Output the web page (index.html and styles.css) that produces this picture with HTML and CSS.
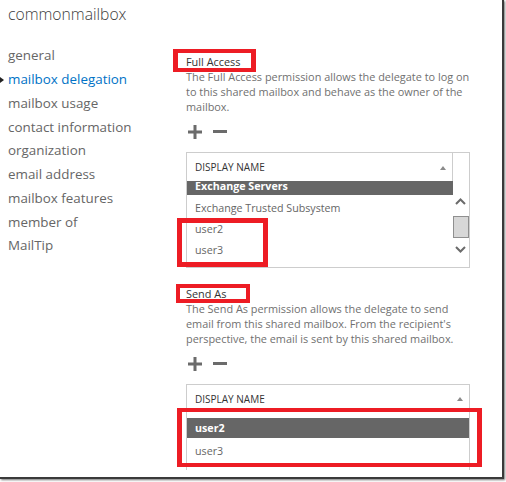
FILE: index.html
```html
<!DOCTYPE html>
<html>
<head>
<meta charset="utf-8">
<link rel="stylesheet" href="styles.css">
</head>
<body>
<div class="window">
  <div class="page">
    <h1 class="title">commonmailbox</h1>
    <div class="main">
      <ul class="nav">
        <li>general</li>
        <li class="active">mailbox delegation</li>
        <li>mailbox usage</li>
        <li>contact information</li>
        <li>organization</li>
        <li>email address</li>
        <li>mailbox features</li>
        <li>member of</li>
        <li>MailTip</li>
      </ul>
      <div class="content">
        <section class="perm">
          <div class="label">Full Access</div>
          <p class="desc">The Full Access permission allows the delegate to log on<br>to this shared mailbox and behave as the owner of the<br>mailbox.</p>
          <div class="tools">
            <svg class="ico" width="14" height="14" viewBox="0 0 14 14"><path d="M7 0V14M0 7H14" stroke="#6b6b6b" stroke-width="3"/></svg>
            <svg class="ico" width="14" height="14" viewBox="0 0 14 14"><path d="M0 6.5H14" stroke="#6b6b6b" stroke-width="3"/></svg>
          </div>
          <div class="grid">
            <div class="ghead">
              <div class="gcol gcol-split">DISPLAY NAME<span class="sort"></span></div>
              <div class="gscroll-head"></div>
            </div>
            <div class="gbody gbody-scroll">
              <div class="rows">
                <div class="row sel row-partial">Exchange Servers</div>
                <div class="row">Exchange Trusted Subsystem</div>
                <div class="row">user2</div>
                <div class="row">user3</div>
              </div>
              <div class="vscroll">
                <svg class="chev chev-up" width="11" height="7" viewBox="0 0 11 7"><polyline points="1,6 5.5,1.5 10,6" fill="none" stroke="#6b6b6b" stroke-width="2"/></svg>
                <div class="thumb"></div>
                <svg class="chev chev-down" width="11" height="7" viewBox="0 0 11 7"><polyline points="1,1 5.5,5.5 10,1" fill="none" stroke="#6b6b6b" stroke-width="2"/></svg>
              </div>
            </div>
          </div>
        </section>
        <section class="perm perm-second">
          <div class="label">Send As</div>
          <p class="desc">The Send As permission allows the delegate to send<br>email from this shared mailbox. From the recipient's<br>perspective, the email is sent by this shared mailbox.</p>
          <div class="tools">
            <svg class="ico" width="14" height="14" viewBox="0 0 14 14"><path d="M7 0V14M0 7H14" stroke="#6b6b6b" stroke-width="3"/></svg>
            <svg class="ico" width="14" height="14" viewBox="0 0 14 14"><path d="M0 6.5H14" stroke="#6b6b6b" stroke-width="3"/></svg>
          </div>
          <div class="grid grid-open">
            <div class="ghead">
              <div class="gcol">DISPLAY NAME<span class="sort"></span></div>
            </div>
            <div class="gbody gbody-plain">
              <div class="rows">
                <div class="row sel">user2</div>
                <div class="row">user3</div>
              </div>
            </div>
          </div>
        </section>
      </div>
    </div>
    <div class="mark mark-fa"></div>
    <div class="mark mark-users"></div>
    <div class="mark mark-sa"></div>
    <div class="mark mark-sausers"></div>
  </div>
</div>
</body>
</html>
```
FILE: styles.css
```css
html, body {
  margin: 0;
  padding: 0;
  background: #fff;
}
body {
  width: 506px;
  height: 482px;
  overflow: hidden;
  font-family: "Open Sans", "Noto Sans", sans-serif;
}
.window {
  width: 504px;
  height: 479px;
  box-sizing: border-box;
  border-right: 2px solid #3a3a3a;
  border-bottom: 2px solid #3a3a3a;
  box-shadow: 1px 1px 2px rgba(0,0,0,0.55);
  background: #fff;
}
.page {
  position: relative;
  height: 470px;
  overflow: hidden;
}
.title {
  margin: 0;
  padding: 4px 8px 0;
  font-size: 15.7px;
  font-weight: 300;
  line-height: 21px;
  color: #3c3c3c;
}
.main {
  display: flex;
}
.nav {
  list-style: none;
  margin: 0;
  padding: 19.3px 0 0 8px;
  width: 186px;
  box-sizing: border-box;
}
.nav li {
  position: relative;
  font-size: 13.4px;
  line-height: 23.75px;
  color: #666;
  white-space: nowrap;
}
.nav li.active {
  color: #0072c6;
}
.nav li.active::before {
  content: "";
  position: absolute;
  left: -8px;
  top: 9px;
  border-left: 4px solid #222;
  border-top: 3px solid transparent;
  border-bottom: 3px solid transparent;
}
.content {
  width: 284px;
  padding-top: 29.3px;
}
.perm-second {
  margin-top: 17.7px;
}
.label {
  font-size: 10.9px;
  line-height: 15px;
  color: #333;
}
.desc {
  margin: 0;
  font-size: 10.9px;
  line-height: 15px;
  color: #707070;
  white-space: nowrap;
}
.tools {
  display: flex;
  gap: 11px;
  margin-top: 11px;
  padding-left: 2px;
  height: 14px;
}
.ico {
  display: block;
}
.grid {
  margin-top: 13px;
  border: 1px solid #cdcdcd;
  width: 284px;
  box-sizing: border-box;
}
.ghead {
  display: flex;
  height: 28px;
}
.gcol {
  flex: 1;
  display: flex;
  align-items: center;
  justify-content: space-between;
  padding: 0 6px 0 8px;
  font-size: 10px;
  color: #333;
}
.gcol-split {
  flex: none;
  width: 266px;
  box-sizing: border-box;
  border-right: 1px solid #cdcdcd;
}
.gscroll-head {
  flex: 1;
}
.sort {
  width: 0;
  height: 0;
  border-left: 3px solid transparent;
  border-right: 3px solid transparent;
  border-bottom: 4px solid #8a8a8a;
  margin-top: 1px;
}
.gbody {
  display: flex;
}
.gbody-scroll {
  height: 86px;
  overflow: hidden;
}
.gbody-plain {
  padding-top: 5px;
  height: 120px;
}
.rows {
  flex: 1;
}
.gbody-scroll .rows {
  flex: none;
  width: 266px;
}
.row {
  height: 20px;
  line-height: 20px;
  margin-bottom: 1px;
  padding-left: 8px;
  font-size: 10.7px;
  color: #666;
  white-space: nowrap;
}
.row.sel {
  background: #666;
  color: #fff;
  font-weight: 700;
  margin-bottom: 3px;
}
.row.row-partial {
  height: 14px;
  line-height: 10px;
}
.vscroll {
  width: 16px;
}
.chev {
  display: block;
  margin-left: 2px;
}
.chev-up {
  margin-top: 17px;
}
.thumb {
  margin-top: 11px;
  height: 22px;
  box-sizing: border-box;
  border: 1px solid #8f8f8f;
  background: #d7d7d7;
}
.chev-down {
  margin-top: 8px;
}
.mark {
  position: absolute;
  box-sizing: border-box;
  border: 4px solid #ed1c24;
}
.mark-fa {
  left: 173px;
  top: 49px;
  width: 83px;
  height: 23px;
  border-width: 4px 5px;
}
.mark-users {
  left: 177px;
  top: 218px;
  width: 91px;
  height: 49px;
  border-width: 5px;
}
.mark-sa {
  left: 176px;
  top: 284px;
  width: 74px;
  height: 19px;
}
.mark-sausers {
  left: 177px;
  top: 408px;
  width: 305px;
  height: 59px;
  border-width: 4px 5px;
}
```
